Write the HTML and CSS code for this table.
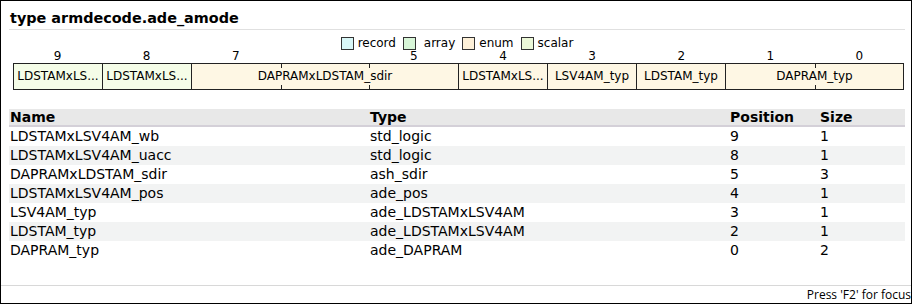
FILE: index.html
```html
<!DOCTYPE html>
<html>
<head>
<meta charset="utf-8">
<link rel="stylesheet" href="styles.css">
</head>
<body>
<div class="frame">
  <div class="main">
    <h1 class="title">type armdecode.ade_amode</h1>
    <div class="legend">
      <span class="lg"><i class="sw sw-record"></i>record</span>
      <span class="lg"><i class="sw sw-array"></i>&nbsp;array</span>
      <span class="lg"><i class="sw sw-enum"></i>enum</span>
      <span class="lg"><i class="sw sw-scalar"></i>scalar</span>
    </div>
    <div class="bits">
      <div class="nums">
        <span>9</span><span>8</span><span>7</span><span></span><span>5</span><span>4</span><span>3</span><span>2</span><span>1</span><span>0</span>
      </div>
      <div class="fields">
        <div class="field scalar s1">LDSTAMxLS...</div>
        <div class="field scalar s1">LDSTAMxLS...</div>
        <div class="field enum s3">DAPRAMxLDSTAM_sdir<i class="tick" style="left:33.333%"></i><i class="tick" style="left:66.667%"></i></div>
        <div class="field enum s1">LDSTAMxLS...</div>
        <div class="field enum s1">LSV4AM_typ</div>
        <div class="field enum s1">LDSTAM_typ</div>
        <div class="field enum s2">DAPRAM_typ<i class="tick" style="left:50%"></i></div>
      </div>
    </div>
    <table class="tbl">
      <thead>
        <tr><th class="c-name">Name</th><th class="c-type">Type</th><th class="c-pos">Position</th><th class="c-size">Size</th></tr>
      </thead>
      <tbody>
        <tr><td>LDSTAMxLSV4AM_wb</td><td>std_logic</td><td>9</td><td>1</td></tr>
        <tr><td>LDSTAMxLSV4AM_uacc</td><td>std_logic</td><td>8</td><td>1</td></tr>
        <tr><td>DAPRAMxLDSTAM_sdir</td><td>ash_sdir</td><td>5</td><td>3</td></tr>
        <tr><td>LDSTAMxLSV4AM_pos</td><td>ade_pos</td><td>4</td><td>1</td></tr>
        <tr><td>LSV4AM_typ</td><td>ade_LDSTAMxLSV4AM</td><td>3</td><td>1</td></tr>
        <tr><td>LDSTAM_typ</td><td>ade_LDSTAMxLSV4AM</td><td>2</td><td>1</td></tr>
        <tr><td>DAPRAM_typ</td><td>ade_DAPRAM</td><td>0</td><td>2</td></tr>
      </tbody>
    </table>
  </div>
  <div class="footer">Press 'F2' for focus</div>
</div>
</body>
</html>
```
FILE: styles.css
```css
html, body {
  margin: 0;
  padding: 0;
  background: #fff;
}
body {
  font-family: "DejaVu Sans", sans-serif;
  color: #000;
}
.frame {
  box-sizing: border-box;
  width: 912px;
  height: 304px;
  border: 1px solid #000;
  display: flex;
  flex-direction: column;
}
.main {
  flex: 1;
  padding: 0 6px 0 8px;
}
.title {
  margin: 0;
  font-size: 14.4px;
  font-weight: bold;
  line-height: 18px;
  padding: 8px 0 2px 1px;
  border-bottom: 1px solid #e0e0e0;
}
.legend {
  display: flex;
  justify-content: center;
  gap: 7px;
  margin-top: 6px;
  font-size: 12px;
  line-height: 14px;
  height: 14px;
}
.lg {
  display: flex;
  align-items: center;
  gap: 4px;
}
.sw {
  display: block;
  box-sizing: border-box;
  width: 13px;
  height: 13px;
  border: 1px solid #333;
}
.sw-record { background: #d8f6f6; }
.sw-array { background: #d8f6d8; }
.sw-enum { background: #fdf0d8; }
.sw-scalar { background: #ecf8d8; }
.bits {
  padding: 0 0 0 4px;
  width: 891px;
}
.nums {
  display: grid;
  grid-template-columns: repeat(10, 1fr);
  font-size: 12px;
  line-height: 13px;
  text-align: center;
  margin-top: 0;
}
.fields {
  display: grid;
  grid-template-columns: repeat(10, 1fr);
  border: 1px solid #222;
  border-left: 0;
  height: 25px;
}
.field {
  position: relative;
  border-left: 1px solid #222;
  font-size: 12px;
  line-height: 25px;
  text-align: center;
  white-space: nowrap;
  overflow: hidden;
}
.s1 { grid-column: span 1; }
.s2 { grid-column: span 2; }
.s3 { grid-column: span 3; }
.scalar { background: #f5fde8; }
.enum { background: #fef7e4; }
.tick {
  position: absolute;
  top: 0;
  bottom: 0;
  width: 1px;
  background:
    linear-gradient(#222, #222) top / 1px 4px no-repeat,
    linear-gradient(#222, #222) bottom / 1px 4px no-repeat;
}
.tbl {
  margin-top: 19px;
  width: 896px;
  border-collapse: collapse;
  font-size: 14px;
}
.tbl th {
  text-align: left;
  font-weight: bold;
  background: #e8e8e8;
  border-bottom: 2px solid #d4d0d8;
  height: 16px;
  line-height: 16px;
  padding: 0 0 0 1px;
}
.tbl td {
  height: 19px;
  line-height: 19px;
  padding: 0 0 0 1px;
}
.tbl tbody tr:nth-child(even) td { background: #f2f3f3; }
.c-name { width: 359px; }
.c-type { width: 359px; }
.c-pos { width: 89px; }
.footer {
  border-top: 1px solid #d8d8d8;
  height: 17px;
  font-family: "Open Sans", sans-serif;
  font-size: 12px;
  line-height: 17px;
  text-align: right;
  padding-right: 0;
  white-space: nowrap;
  overflow: hidden;
}
```
